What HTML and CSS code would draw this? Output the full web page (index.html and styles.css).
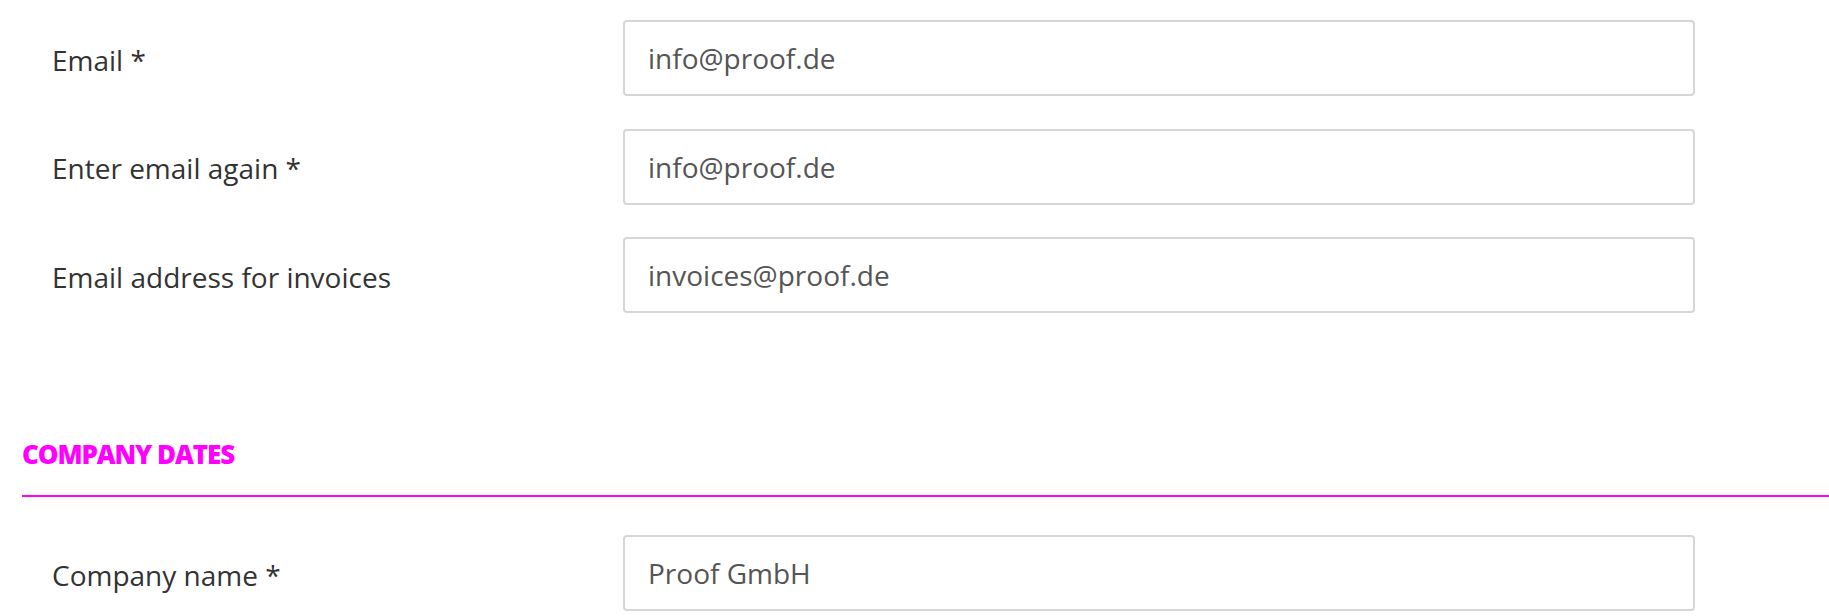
FILE: index.html
```html
<!DOCTYPE html>
<html lang="en">
<head>
<meta charset="utf-8">
<title>Account details</title>
<link rel="stylesheet" href="styles.css">
</head>
<body>
<form class="account-form">
  <div class="field-group">
    <div class="field-row">
      <label class="field-label" for="email">Email *</label>
      <input class="field-input" id="email" type="text" value="info@proof.de">
    </div>
    <div class="field-row">
      <label class="field-label" for="email-repeat">Enter email again *</label>
      <input class="field-input" id="email-repeat" type="text" value="info@proof.de">
    </div>
    <div class="field-row">
      <label class="field-label" for="email-invoice">Email address for invoices</label>
      <input class="field-input" id="email-invoice" type="text" value="invoices@proof.de">
    </div>
  </div>

  <h2 class="section-title">COMPANY DATES</h2>

  <div class="field-group">
    <div class="field-row">
      <label class="field-label" for="company">Company name *</label>
      <input class="field-input" id="company" type="text" value="Proof GmbH">
    </div>
  </div>
</form>
</body>
</html>
```

FILE: styles.css
```css
html, body {
  margin: 0;
  padding: 0;
  background: #ffffff;
}

body {
  font-family: "Open Sans", "Liberation Sans", sans-serif;
  color: #333333;
  overflow: hidden;
}

.account-form {
  padding: 20px 0 0 22px;
}

.field-group {
  display: flex;
  flex-direction: column;
  gap: 32.5px;
}

.field-row {
  display: grid;
  grid-template-columns: 601px 1072px;
  align-items: center;
}

.field-label {
  padding: 3px 0 0 30px;
  font-size: 28px;
  color: #333333;
}

.field-input {
  box-sizing: border-box;
  width: 100%;
  height: 76px;
  margin: 0;
  padding: 0 20px 0 23px;
  border: 2px solid #d6d6d6;
  border-radius: 4px;
  background: #ffffff;
  font-family: inherit;
  font-size: 28px;
  color: #555555;
  outline: none;
}

.section-title {
  margin: 128px 0 38px 0;
  padding: 0 0 28px 0;
  border-bottom: 2px solid #ff00ff;
  font-family: "Open Sans", sans-serif;
  font-size: 26px;
  line-height: 1;
  font-weight: 800;
  letter-spacing: -1.1px;
  color: #ff00ff;
}
```
